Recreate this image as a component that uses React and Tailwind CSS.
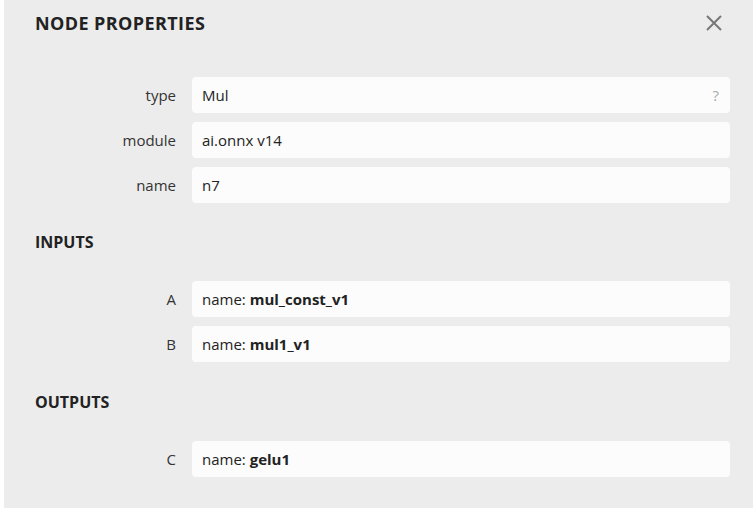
const attributes = [
  { label: 'type', value: 'Mul', help: true },
  { label: 'module', value: 'ai.onnx v14' },
  { label: 'name', value: 'n7' },
]

const inputs = [
  { label: 'A', name: 'mul_const_v1' },
  { label: 'B', name: 'mul1_v1' },
]

const outputs = [{ label: 'C', name: 'gelu1' }]

function Row({ label, children, help }) {
  return (
    <div className="flex items-center h-[36px]">
      <div className="w-[172px] text-right text-[#333]">{label}</div>
      <div className="ml-[16px] w-[538px] h-full bg-[#fcfcfc] rounded-[4px] flex items-center pl-[10px] pr-[11px] text-[#222]">
        <div className="flex-1">{children}</div>
        {help && <span className="text-[#aaa]">?</span>}
      </div>
    </div>
  )
}

function Section({ title }) {
  return (
    <div className="pl-[31px] h-[20px] flex items-center font-bold text-[16px] text-[#222] uppercase">
      {title}
    </div>
  )
}

export default function App() {
  return (
    <div className="bg-white h-[508px] pl-[4px]" style={{ fontFamily: '"Open Sans", sans-serif' }}>
      <div className="h-full bg-[#ececec] text-[15px]">
        <div className="flex items-center justify-between h-[46px] pl-[31px] pr-[31px]">
          <h1 className="font-bold text-[18px] tracking-[0.4px] text-[#222] uppercase">Node Properties</h1>
          <svg width="16" height="16" viewBox="0 0 16 16" className="text-[#777]">
            <path d="M1 1 L15 15 M15 1 L1 15" stroke="currentColor" strokeWidth="2" strokeLinecap="butt" />
          </svg>
        </div>

        <div className="mt-[31px] flex flex-col gap-[9px]">
          {attributes.map((a) => (
            <Row key={a.label} label={a.label} help={a.help}>{a.value}</Row>
          ))}
        </div>

        <div className="mt-[29px]">
          <Section title="Inputs" />
        </div>
        <div className="mt-[29px] flex flex-col gap-[9px]">
          {inputs.map((i) => (
            <Row key={i.label} label={i.label}>
              name: <span className="font-bold">{i.name}</span>
            </Row>
          ))}
        </div>

        <div className="mt-[30px]">
          <Section title="Outputs" />
        </div>
        <div className="mt-[29px] flex flex-col gap-[9px]">
          {outputs.map((o) => (
            <Row key={o.label} label={o.label}>
              name: <span className="font-bold">{o.name}</span>
            </Row>
          ))}
        </div>
      </div>
    </div>
  )
}
